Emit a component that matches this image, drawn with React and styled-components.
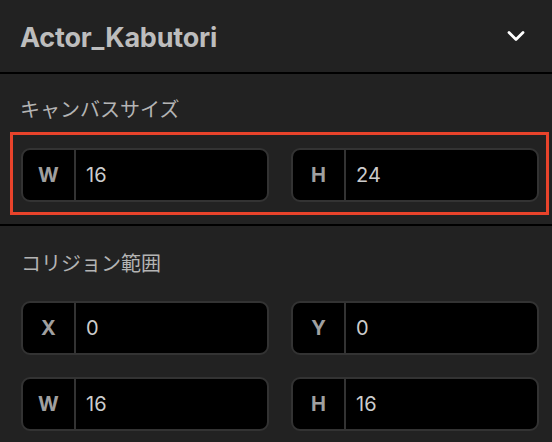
import React from "react";
import styled, { createGlobalStyle } from "styled-components";

const GlobalStyle = createGlobalStyle`
  html, body {
    margin: 0;
    padding: 0;
    background: #222222;
  }
  body {
    font-family: Inter, "Noto Sans CJK JP", sans-serif;
    -webkit-font-smoothing: antialiased;
  }
`;

const canvasSize = [
  { label: "W", value: "16" },
  { label: "H", value: "24" },
];

const collision = [
  { label: "X", value: "0" },
  { label: "Y", value: "0" },
  { label: "W", value: "16" },
  { label: "H", value: "16" },
];

const Field = ({ label, value }) => (
  <FieldBox>
    <FieldLabel>{label}</FieldLabel>
    <FieldValue>{value}</FieldValue>
  </FieldBox>
);

const Chevron = () => (
  <svg width="18" height="12" viewBox="0 0 18 12">
    <path
      d="M2 2.5 L9 9.5 L16 2.5"
      fill="none"
      stroke="#ffffff"
      strokeWidth="2.8"
      strokeLinecap="round"
      strokeLinejoin="round"
    />
  </svg>
);

const App = () => {
  return (
    <>
      <GlobalStyle />
      <Panel>
        <Header>
          <Title>Actor_Kabutori</Title>
          <Chevron />
        </Header>

        <Section pad="23px 0 9px">
          <SectionLabel>キャンバスサイズ</SectionLabel>
          <Highlight>
            <FieldGrid>
              {canvasSize.map((f) => (
                <Field key={f.label} label={f.label} value={f.value} />
              ))}
            </FieldGrid>
          </Highlight>
        </Section>

        <Section pad="25px 13px 11px 21px" last>
          <SectionLabel indent="-1px">コリジョン範囲</SectionLabel>
          <FieldGrid top="26px">
            {collision.map((f, i) => (
              <Field key={i} label={f.label} value={f.value} />
            ))}
          </FieldGrid>
        </Section>
      </Panel>
    </>
  );
};

export default App;

const Panel = styled.div`
  width: 552px;
  min-height: 442px;
  background: #222222;
  display: flex;
  flex-direction: column;
`;

const Header = styled.div`
  height: 74px;
  box-sizing: border-box;
  display: flex;
  align-items: center;
  justify-content: space-between;
  padding: 0 27px 0 20px;
  border-bottom: 2px solid #000000;
`;

const Title = styled.div`
  font-family: Inter, "Liberation Sans", sans-serif;
  font-weight: 700;
  font-size: 27px;
  color: #bdbdbd;
  letter-spacing: -0.2px;
  margin-top: 2px;
`;

const Section = styled.div`
  padding: ${(p) => p.pad};
  border-bottom: ${(p) => (p.last ? "none" : "2px solid #000000")};
`;

const SectionLabel = styled.div`
  font-family: "Noto Sans CJK JP", sans-serif;
  font-size: 20px;
  line-height: 24px;
  color: #b4b4b4;
  padding-left: ${(p) => (p.indent ? "0" : "20px")};
`;

const Highlight = styled.div`
  margin: 11px 3px 0 10px;
  border: 3px solid #e8432b;
  padding: 13px 7px 10px 8px;
`;

const FieldGrid = styled.div`
  display: grid;
  grid-template-columns: 248px 248px;
  column-gap: 22px;
  row-gap: 22px;
  margin-top: ${(p) => p.top || "0"};
`;

const FieldBox = styled.div`
  height: 54px;
  box-sizing: border-box;
  display: flex;
  align-items: stretch;
  background: #000000;
  border: 2px solid #333333;
  border-radius: 9px;
  overflow: hidden;
`;

const FieldLabel = styled.div`
  width: 51px;
  flex-shrink: 0;
  display: flex;
  align-items: center;
  justify-content: center;
  border-right: 2px solid #333333;
  font-family: Inter, "Liberation Sans", sans-serif;
  font-weight: 700;
  font-size: 20px;
  color: #a0a0a0;
`;

const FieldValue = styled.div`
  display: flex;
  align-items: center;
  padding-left: 10px;
  font-family: Inter, "Liberation Sans", sans-serif;
  font-size: 20px;
  color: #cccccc;
`;
